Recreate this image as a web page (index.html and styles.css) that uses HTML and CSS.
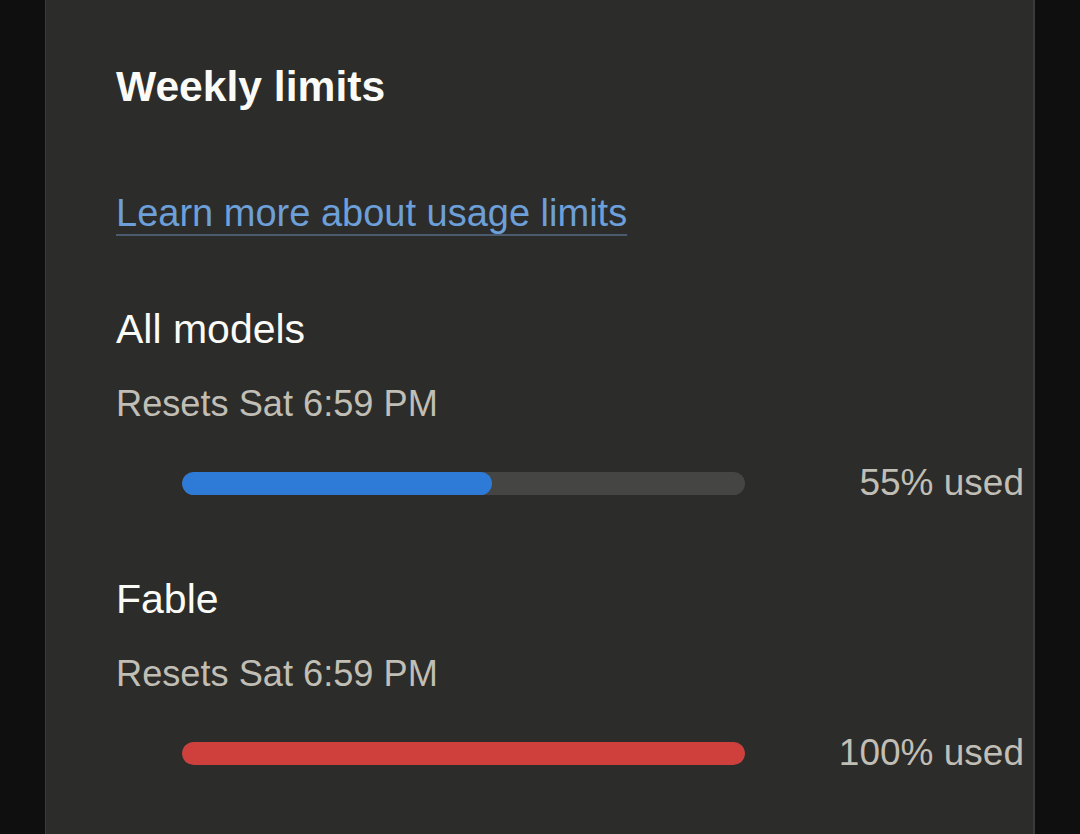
FILE: index.html
```html
<!DOCTYPE html>
<html lang="en">
<head>
    <meta charset="UTF-8">
    <meta name="viewport" content="width=device-width, initial-scale=1.0">
    <title>Usage</title>
    <link rel="stylesheet" href="styles.css">
</head>
<body>
    <div class="panel">
        <h1>Weekly limits</h1>

        <a class="learn" href="#">Learn more about usage limits</a>

        <div class="limits">
            <div class="limit">
                <div class="limit-name">All models</div>
                <div class="limit-reset">Resets Sat 6:59 PM</div>
                <div class="limit-row">
                    <div class="bar">
                        <div class="bar-fill" style="width: 55%;"></div>
                    </div>
                    <span class="limit-used">55% used</span>
                </div>
            </div>

            <div class="limit">
                <div class="limit-name">Fable</div>
                <div class="limit-reset">Resets Sat 6:59 PM</div>
                <div class="limit-row">
                    <div class="bar">
                        <div class="bar-fill bar-full" style="width: 100%;"></div>
                    </div>
                    <span class="limit-used">100% used</span>
                </div>
            </div>
        </div>
    </div>
</body>
</html>
```

FILE: styles.css
```css
:root {
    --page: #0f0f0f;
    --panel: #2c2c2a;
    --edge: #3b3b39;
    --title: #fafaf7;
    --muted: #c0beb5;
    --link: #6d9fd9;
    --track: #454543;
    --blue: #2e7ad7;
    --red: #cf3f3c;
}

* {
    margin: 0;
    padding: 0;
    box-sizing: border-box;
    font-family: 'Liberation Sans', Arial, sans-serif;
}

body {
    background: var(--page);
    min-height: 100vh;
    overflow: hidden;
}

.panel {
    margin-left: 45px;
    width: 990px;
    min-height: 834px;
    background: var(--panel);
    border-left: 1px solid var(--edge);
    border-right: 2px solid var(--edge);
    padding: 61px 9px 0 70px;
}

h1 {
    color: var(--title);
    font-size: 42.6px;
    font-weight: 700;
    line-height: 50px;
}

.learn {
    display: inline-block;
    margin-top: 79px;
    color: var(--link);
    font-size: 38px;
    line-height: 46px;
    text-decoration: underline;
    text-decoration-color: #4b5a6c;
    text-decoration-thickness: 2px;
    text-underline-offset: 8px;
}

.limits {
    display: flex;
    flex-direction: column;
    gap: 70px;
    margin-top: 69px;
}

.limit-name {
    color: var(--title);
    font-size: 41px;
    line-height: 48px;
}

.limit-reset {
    margin-top: 29px;
    color: var(--muted);
    font-size: 36.2px;
    line-height: 44px;
}

.limit-row {
    display: flex;
    align-items: center;
    height: 44px;
    margin-top: 35px;
    padding-left: 66px;
}

.bar {
    width: 563px;
    height: 23px;
    border-radius: 12px;
    background: var(--track);
    overflow: hidden;
}

.bar-fill {
    height: 100%;
    border-radius: 12px;
    background: var(--blue);
}

.bar-full {
    background: var(--red);
}

.limit-used {
    flex: 1;
    text-align: right;
    color: var(--muted);
    font-size: 37px;
    line-height: 44px;
}
```
